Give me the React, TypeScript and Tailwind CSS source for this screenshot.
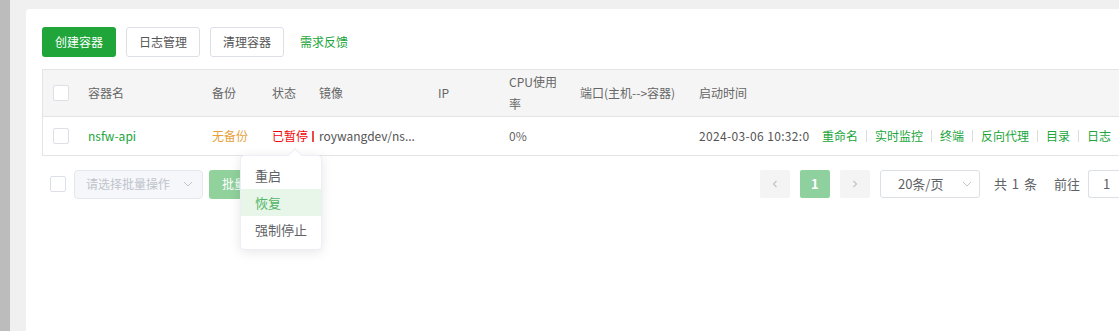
import React from "react";

const font = { fontFamily: '"Noto Sans CJK SC", "Microsoft YaHei", sans-serif' };

function Checkbox({ className = "" }: { className?: string }) {
  return <span className={`block shrink-0 w-[16px] h-[16px] border border-[#dcdfe6] rounded-[2px] bg-white ${className}`} />;
}

function Chevron({ className = "" }: { className?: string }) {
  return (
    <svg width="12" height="12" viewBox="0 0 12 12" className={className}>
      <path d="M2 4 L6 8 L10 4" fill="none" stroke="#c0c4cc" strokeWidth="1" />
    </svg>
  );
}

const actions = ["重命名", "实时监控", "终端", "反向代理", "目录", "日志"];

export default function App() {
  return (
    <div className="w-[1119px] h-[331px] overflow-hidden flex bg-[#f0f0f0] text-[12px]" style={font}>
      <div className="w-[10px] shrink-0 bg-[#bcbcbc]" />
      <div className="flex-1 pl-[16px] pt-[9px] min-w-0">
        <div className="bg-white rounded-tl-[4px] h-full pl-[16px] pt-[18px] relative">
          {/* toolbar */}
          <div className="flex items-center h-[30px]">
            <button className="h-[30px] w-[74px] bg-[#20a53a] text-white rounded-[3px] text-[12px]">创建容器</button>
            <button className="ml-[10px] h-[30px] w-[74px] bg-white border border-[#dcdfe6] text-[#555] rounded-[3px] text-[12px]">日志管理</button>
            <button className="ml-[10px] h-[30px] w-[74px] bg-white border border-[#dcdfe6] text-[#555] rounded-[3px] text-[12px]">清理容器</button>
            <span className="ml-[16px] text-[#20a53a]">需求反馈</span>
          </div>

          {/* table */}
          <div className="mt-[12px] border-l border-t border-b border-[#e4e4e4] w-[1100px]">
            <div className="flex items-center h-[47px] bg-[#f5f5f5] border-b border-[#e4e4e4] text-[#666]">
              <div className="w-[35px] shrink-0 flex justify-center pl-[1px]"><Checkbox /></div>
              <div className="w-[124px] shrink-0 pl-[10px]">容器名</div>
              <div className="w-[60px] shrink-0 pl-[10px]">备份</div>
              <div className="w-[47px] shrink-0 pl-[10px]">状态</div>
              <div className="w-[119px] shrink-0 pl-[10px]">镜像</div>
              <div className="w-[71px] shrink-0 pl-[10px]">IP</div>
              <div className="w-[71px] shrink-0 pl-[10px] leading-[22px] pr-[8px]">CPU使用率</div>
              <div className="w-[119px] shrink-0 pl-[10px]">端口(主机--&gt;容器)</div>
              <div className="w-[133px] shrink-0 pl-[10px]">启动时间</div>
              <div className="flex-1" />
            </div>
            <div className="flex items-center h-[38px] text-[#666] whitespace-nowrap">
              <div className="w-[35px] shrink-0 flex justify-center pl-[1px]"><Checkbox /></div>
              <div className="w-[124px] shrink-0 pl-[10px] text-[#20a53a]">nsfw-api</div>
              <div className="w-[60px] shrink-0 pl-[10px] text-[#e6a23c]">无备份</div>
              <div className="w-[47px] shrink-0 pl-[10px] text-[#ef0808] flex items-center overflow-visible relative z-10">
                <span className="shrink-0">已暂停</span>
                <span className="shrink-0 ml-[4px] inline-block w-[1.5px] h-[11px] bg-[#e84a4a]" />
              </div>
              <div className="w-[119px] shrink-0 pl-[10px] text-[#555]">roywangdev/ns...</div>
              <div className="w-[71px] shrink-0 pl-[10px]" />
              <div className="w-[71px] shrink-0 pl-[10px]">0%</div>
              <div className="w-[119px] shrink-0 pl-[10px]" />
              <div className="w-[133px] shrink-0 pl-[10px] text-[#555]">
                <span className="block w-[111px] overflow-hidden tracking-[0.35px]">2024-03-06 10:32:06</span>
              </div>
              <div className="flex-1 flex items-center text-[#20a53a]">
                {actions.map((a, i) => (
                  <React.Fragment key={a}>
                    {i > 0 && <span className="shrink-0 mx-[8px] inline-block w-px h-[12px] bg-[#ddd]" />}
                    <span className="shrink-0">{a}</span>
                  </React.Fragment>
                ))}
                <span className="shrink-0 mx-[8px] inline-block w-px h-[12px] bg-[#ddd]" />
              </div>
            </div>
          </div>

          {/* bottom bar */}
          <div className="flex items-center mt-[13px] h-[30px]">
            <Checkbox className="ml-[8px]" />
            <div className="ml-[8px] w-[129px] h-[29px] border border-[#e4e7ed] bg-[#f5f7fa] rounded-[4px] flex items-center pl-[11px] pr-[8px] text-[#c0c4cc]">
              <span className="flex-1">请选择批量操作</span>
              <Chevron />
            </div>
            <button className="ml-[6px] h-[29px] w-[80px] bg-[#90d19c] text-white rounded-[3px] text-[12px] text-left pl-[13px]">批量操作</button>

            <div className="ml-auto flex items-center">
              <div className="w-[30px] h-[28px] bg-[#f4f4f5] rounded-[2px] flex items-center justify-center">
                <svg width="10" height="10" viewBox="0 0 10 10"><path d="M6.5 2 L3.5 5 L6.5 8" fill="none" stroke="#c0c4cc" strokeWidth="1.2" /></svg>
              </div>
              <div className="ml-[10px] w-[30px] h-[28px] bg-[#8fd19e] rounded-[2px] flex items-center justify-center text-white font-bold text-[13px]">1</div>
              <div className="ml-[10px] w-[30px] h-[28px] bg-[#f4f4f5] rounded-[2px] flex items-center justify-center">
                <svg width="10" height="10" viewBox="0 0 10 10"><path d="M3.5 2 L6.5 5 L3.5 8" fill="none" stroke="#c0c4cc" strokeWidth="1.2" /></svg>
              </div>
              <div className="ml-[10px] w-[100px] h-[28px] border border-[#dcdfe6] rounded-[3px] flex items-center pl-[17px] pr-[6px] text-[#606266] text-[13px]">
                <span className="flex-1">20条/页</span>
                <Chevron />
              </div>
              <span className="ml-[14px] text-[#606266] text-[13px] whitespace-pre tracking-[1px]">共 1 条</span>
              <span className="ml-[16px] text-[#606266] text-[13px]">前往</span>
              <div className="ml-[8px] w-[31px] h-[28px] border border-[#dcdfe6] border-r-0 rounded-l-[3px] flex items-center pl-[14px] text-[#606266] text-[13px]">1</div>
            </div>
          </div>

          {/* popover */}
          <div className="absolute left-[214px] top-[146px] w-[82px] bg-white rounded-[4px] border border-[#ebeef5] shadow-[0_2px_12px_rgba(0,0,0,0.1)] py-[6px] z-20">
            <div className="absolute -top-[6px] left-[49px] w-[10px] h-[10px] bg-white border-l border-t border-[#ebeef5] rotate-45" />
            <div className="h-[27px] flex items-center pl-[14px] text-[#606266] text-[13px]">重启</div>
            <div className="h-[27px] flex items-center pl-[14px] text-[#53b565] bg-[#e8f6ea] text-[13px]">恢复</div>
            <div className="h-[27px] flex items-center pl-[14px] text-[#606266] text-[13px]">强制停止</div>
          </div>
        </div>
      </div>
    </div>
  );
}
